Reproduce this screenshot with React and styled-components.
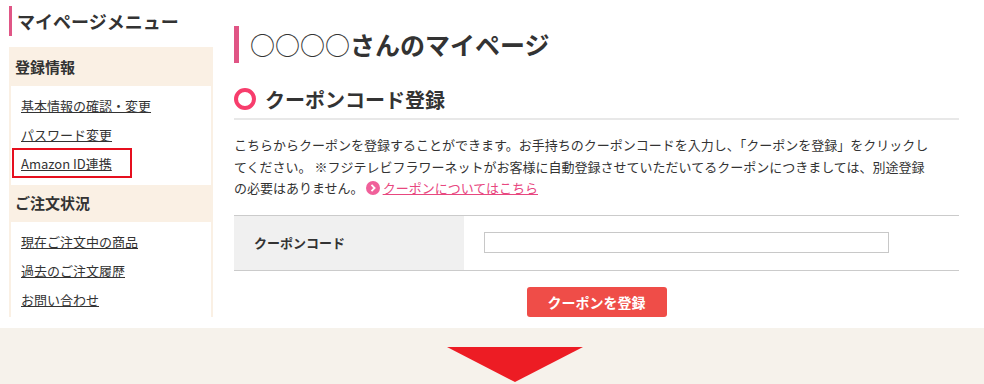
import React from "react";
import styled, { createGlobalStyle } from "styled-components";

const GlobalStyle = createGlobalStyle`
	body {
		margin: 0;
		background: #fff;
		color: #333;
		font-family: "Noto Sans CJK JP", "Noto Sans", sans-serif;
		font-size: 13px;
	}
`;

const Page = styled.div`
	display: flex;
	gap: 21px;
	padding-left: 9px;
	height: 328px;
	box-sizing: border-box;
`;

const Sidebar = styled.aside`
	width: 204px;
	padding-top: 6px;
	flex-shrink: 0;
`;

const SideTitle = styled.h2`
	margin: 0;
	height: 30px;
	line-height: 30px;
	padding-left: 5px;
	border-left: 3px solid #e05686;
	font-size: 18px;
	font-weight: 700;
	color: #333;
`;

const MenuBox = styled.nav`
	margin-top: 11px;
	height: 270px;
	overflow: hidden;
	background: #faf0e4;
	padding: 2px 2px 0;
	box-sizing: border-box;
`;

const MenuHead = styled.h3`
	margin: 0;
	height: 37px;
	line-height: 36px;
	padding-left: 4px;
	font-size: 15px;
	font-weight: 700;
	color: #333;
`;

const MenuList = styled.ul`
	list-style: none;
	margin: 0;
	padding: 5px 0 7px 10px;
	background: #fff;
`;

const MenuItem = styled.li`
	height: 29px;
	line-height: 29px;
`;

const MenuLink = styled.a`
	position: relative;
	color: #333;
	text-decoration: underline;
	font-size: 13px;

	${(p) =>
		p.$marked &&
		`
		&::after {
			content: "";
			position: absolute;
			left: -9px;
			top: -6px;
			width: 120px;
			height: 30px;
			box-sizing: border-box;
			border: 2px solid #e60f1e;
		}
	`}
`;

const Main = styled.main`
	width: 725px;
	padding-top: 26px;
`;

const PageTitle = styled.h1`
	margin: 0;
	height: 37px;
	line-height: 37px;
	padding-left: 11px;
	border-left: 5px solid #e05585;
	font-size: 25px;
	font-weight: 700;
	color: #333;

	span {
		font-weight: 400;
	}
`;

const SectionHead = styled.h2`
	margin: 25px 0 0;
	display: flex;
	align-items: center;
	gap: 9px;
	height: 22px;
	padding-bottom: 8px;
	border-bottom: 2px solid #e8e8e8;
	font-size: 20px;
	font-weight: 700;
	color: #333;
`;

const Ring = styled.span`
	width: 22px;
	height: 22px;
	box-sizing: border-box;
	border: 4px solid #f73d6c;
	border-radius: 50%;
	flex-shrink: 0;
`;

const Lead = styled.p`
	margin: 14px 0 0;
	width: 703px;
	font-size: 13px;
	line-height: 21.5px;
	color: #333;
`;

const MoreLink = styled.a`
	margin-left: 2px;
	color: #e8477f;
	text-decoration: underline;

	svg {
		vertical-align: -2px;
		margin-right: 3px;
	}
`;

const Table = styled.div`
	margin-top: 16px;
	display: grid;
	grid-template-columns: 230px 1fr;
	border-top: 1px solid #cbcbcb;
	border-bottom: 1px solid #cbcbcb;
	height: 56px;
	box-sizing: border-box;
`;

const Label = styled.div`
	background: #f0f0f0;
	display: flex;
	align-items: center;
	padding-left: 20px;
	font-weight: 700;
	font-size: 13px;
`;

const Field = styled.div`
	display: flex;
	align-items: center;
	padding-left: 20px;
`;

const Input = styled.input`
	width: 405px;
	height: 21px;
	box-sizing: border-box;
	border: 1px solid #c8c8c8;
	outline: none;
	padding: 0 4px;
`;

const Actions = styled.div`
	display: flex;
	justify-content: center;
	margin-top: 16px;
`;

const Button = styled.button`
	width: 140px;
	height: 30px;
	border: none;
	border-radius: 3px;
	background: #ef4d48;
	color: #fff;
	font-family: inherit;
	font-size: 14px;
	font-weight: 700;
	cursor: pointer;
`;

const Band = styled.div`
	height: 56px;
	background: #f6f2eb;
	padding: 19px 0 0 447px;
	box-sizing: border-box;
`;

const Arrow = styled.div`
	width: 0;
	height: 0;
	border-left: 68px solid transparent;
	border-right: 68px solid transparent;
	border-top: 35px solid #ed1c24;
`;

const ChevronDot = () => (
	<svg width="14" height="14" viewBox="0 0 14 14">
		<circle cx="7" cy="7" r="7" fill="#f0609a" />
		<path d="M5.5 3.8 L8.6 7 L5.5 10.2" fill="none" stroke="#fff" strokeWidth="1.8" />
	</svg>
);

const menus = [
	{
		head: "登録情報",
		links: ["基本情報の確認・変更", "パスワード変更", "Amazon ID連携"],
	},
	{
		head: "ご注文状況",
		links: ["現在ご注文中の商品", "過去のご注文履歴", "お問い合わせ"],
	},
];

export default function App() {
	return (
		<>
			<GlobalStyle />
			<Page>
				<Sidebar>
					<SideTitle>マイページメニュー</SideTitle>
					<MenuBox>
						{menus.map((m) => (
							<div key={m.head}>
								<MenuHead>{m.head}</MenuHead>
								<MenuList>
									{m.links.map((l) => (
										<MenuItem key={l}>
											<MenuLink href="#" $marked={l === "Amazon ID連携"}>
												{l}
											</MenuLink>
										</MenuItem>
									))}
								</MenuList>
							</div>
						))}
					</MenuBox>
				</Sidebar>

				<Main>
					<PageTitle>
						<span>○○○○</span>さんのマイページ
					</PageTitle>
					<SectionHead>
						<Ring />
						クーポンコード登録
					</SectionHead>
					<Lead>
						こちらからクーポンを登録することができます。お手持ちのクーポンコードを入力し、「クーポンを登録」をクリックしてください。 ※フジテレビフラワーネットがお客様に自動登録させていただいてるクーポンにつきましては、別途登録の必要はありません。
						<MoreLink href="#">
							<ChevronDot />
							クーポンについてはこちら
						</MoreLink>
					</Lead>
					<Table>
						<Label>クーポンコード</Label>
						<Field>
							<Input type="text" />
						</Field>
					</Table>
					<Actions>
						<Button>クーポンを登録</Button>
					</Actions>
				</Main>
			</Page>
			<Band>
				<Arrow />
			</Band>
		</>
	);
}
